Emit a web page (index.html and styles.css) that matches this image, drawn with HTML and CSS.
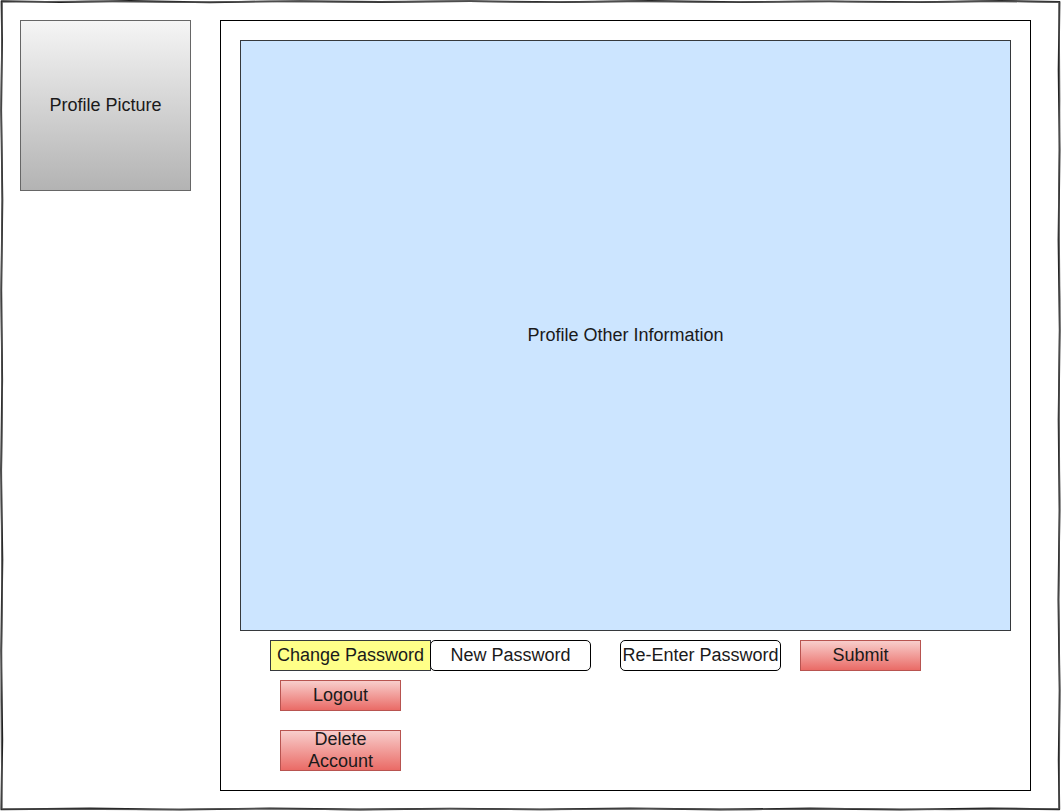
FILE: index.html
```html
<!DOCTYPE html>
<html>
<head>
<meta charset="utf-8">
<link rel="stylesheet" href="styles.css">
</head>
<body>
<div class="page">
  <svg class="sketch" width="1061" height="811" viewBox="0 0 1061 811">
    <path d="M1.5 1.2 L60 2.1 L130 1 L210 2.3 L300 1.1 L380 2 L470 1.2 L560 2.2 L650 1 L740 2.1 L830 1.3 L920 2.2 L1000 1 L1059.5 1.8 L1058.6 70 L1059.6 150 L1058.5 240 L1059.7 330 L1058.6 420 L1059.5 510 L1058.4 600 L1059.6 690 L1058.7 760 L1059.3 809.3 L990 808.4 L900 809.6 L810 808.5 L720 809.5 L630 808.3 L540 809.4 L450 808.6 L360 809.5 L270 808.4 L180 809.6 L90 808.5 L1.3 809.4 L2.3 740 L1.2 650 L2.4 560 L1.1 470 L2.2 380 L1.3 290 L2.4 200 L1.2 110 L2.1 40 Z" fill="none" stroke="#222" stroke-width="1.8" stroke-linejoin="round"/>
    <path d="M2.2 2 L90 1.2 L180 2.4 L270 1.3 L360 2.2 L450 1.1 L540 2.3 L630 1.2 L720 2.4 L810 1.1 L900 2.3 L990 1.2 L1059 2.4 L1059.8 100 L1058.8 200 L1059.9 300 L1058.9 400 L1059.8 500 L1058.7 600 L1059.8 700 L1059.1 808.6 L950 809.7 L850 808.7 L750 809.6 L650 808.6 L550 809.7 L450 808.7 L350 809.6 L250 808.6 L150 809.7 L2 808.8 L1 700 L2.2 600 L1.2 500 L2.3 400 L1.1 300 L2.2 200 L1.2 100 Z" fill="none" stroke="#555" stroke-width="1.2" stroke-linejoin="round" opacity="0.85"/>
  </svg>
  <div class="layout">
    <div class="picture">Profile Picture</div>
    <div class="main">
      <div class="info">Profile Other Information</div>
      <div class="row">
        <div class="box change">Change Password</div>
        <div class="box field new">New Password</div>
        <div class="box field reenter">Re-Enter Password</div>
        <div class="box btn submit">Submit</div>
      </div>
      <div class="box btn logout">Logout</div>
      <div class="box btn delete">Delete Account</div>
    </div>
  </div>
</div>
</body>
</html>
```

FILE: styles.css
```css
* { box-sizing: border-box; }
html, body { margin: 0; padding: 0; background: #fff; }
body { font-family: "Liberation Sans", Arial, sans-serif; font-size: 18px; color: #1a1a1a; }
.page { position: relative; width: 1061px; height: 811px; overflow: hidden; }
.sketch { position: absolute; left: 0; top: 0; pointer-events: none; }
.layout { display: flex; align-items: flex-start; padding: 20px 0 0 20px; gap: 29px; }
.picture {
  width: 171px; height: 171px;
  border: 1px solid #666;
  background: linear-gradient(to bottom, #f5f5f5, #b3b3b3);
  display: flex; align-items: center; justify-content: center;
  white-space: nowrap;
}
.main {
  width: 811px; height: 771px;
  border: 1px solid #000;
  padding: 19px;
}
.info {
  width: 771px; height: 591px;
  background: #cce5ff;
  border: 1px solid #36393d;
  display: flex; align-items: center; justify-content: center;
  padding-bottom: 1px;
}
.row { display: flex; margin: 9px 0 0 30px; }
.box {
  height: 31px;
  display: flex; align-items: center; justify-content: center;
  text-align: center; line-height: 22px;
  white-space: nowrap;
  padding-bottom: 2px;
}
.change { width: 161px; background: #ffff88; border: 1px solid #36393d; }
.field { width: 161px; background: #fff; border: 1px solid #000; border-radius: 5px; }
.new { margin-left: -1px; }
.reenter { margin-left: 29px; }
.btn {
  width: 121px;
  background: linear-gradient(to bottom, #f8cecc, #ea6b66);
  border: 1px solid #b85450;
}
.submit { margin-left: 19px; }
.logout { margin: 9px 0 0 40px; }
.delete { margin: 19px 0 0 40px; height: 41px; padding: 0 10px 2px; white-space: normal; }
```
